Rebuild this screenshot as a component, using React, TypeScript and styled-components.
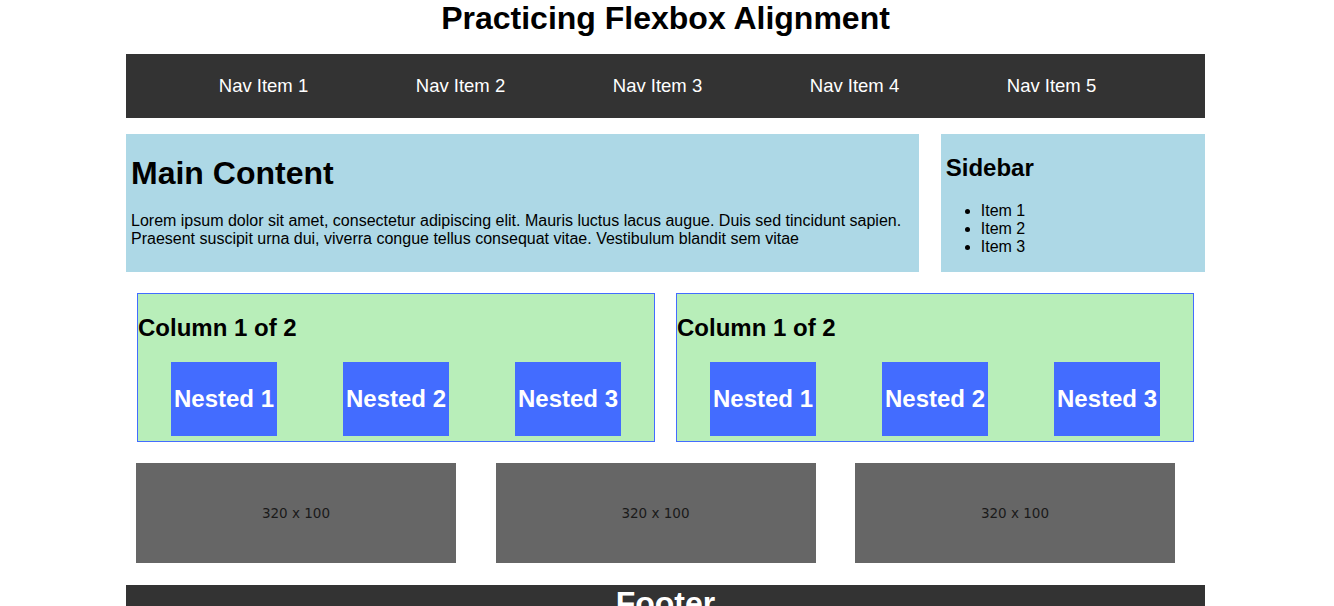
import React from 'react';
import styled, {createGlobalStyle} from 'styled-components';

const GlobalStyle = createGlobalStyle`
    body {
        margin: 0;
        padding-right: 3px;
        font-family: "Liberation Sans", Arial, sans-serif;
        color: #000;
        background: #fff;
    }
`;

const navItems = ['Nav Item 1', 'Nav Item 2', 'Nav Item 3', 'Nav Item 4', 'Nav Item 5'];
const sidebarItems = ['Item 1', 'Item 2', 'Item 3'];
const nested = ['Nested 1', 'Nested 2', 'Nested 3'];
const images = [1, 2, 3];

const App = () => (
    <>
        <GlobalStyle/>
        <PageTitle>{'Practicing Flexbox Alignment'}</PageTitle>
        <Container>
            <Nav>
                <NavList>
                    {navItems.map((item) => (
                        <NavItem key={item}>{item}</NavItem>
                    ))}
                </NavList>
            </Nav>
            <ContentRow>
                <Panel $grow={3}>
                    <MainTitle>{'Main Content'}</MainTitle>
                    <Text>
                        {'Lorem ipsum dolor sit amet, consectetur adipiscing elit. Mauris luctus lacus augue. Duis sed tincidunt sapien. Praesent suscipit urna dui, viverra congue tellus consequat vitae. Vestibulum blandit sem vitae'}
                    </Text>
                </Panel>
                <Panel $grow={1}>
                    <SidebarTitle>{'Sidebar'}</SidebarTitle>
                    <SidebarList>
                        {sidebarItems.map((item) => (
                            <li key={item}>{item}</li>
                        ))}
                    </SidebarList>
                </Panel>
            </ContentRow>
            <ColumnRow>
                {[0, 1].map((col) => (
                    <Column key={col}>
                        <ColumnTitle>{'Column 1 of 2'}</ColumnTitle>
                        <NestedRow>
                            {nested.map((label) => (
                                <NestedBox key={label}>
                                    <NestedLabel>{label}</NestedLabel>
                                </NestedBox>
                            ))}
                        </NestedRow>
                    </Column>
                ))}
            </ColumnRow>
            <ImageRow>
                {images.map((i) => (
                    <Placeholder key={i}>{'320 x 100'}</Placeholder>
                ))}
            </ImageRow>
            <Footer>
                <FooterTitle>{'Footer'}</FooterTitle>
            </Footer>
        </Container>
    </>
);

const PageTitle = styled.h1`
    margin: 0 0 17px;
    font-size: 32px;
    font-weight: 700;
    text-align: center;
`;

const Container = styled.div`
    width: 1079px;
    margin: 0 auto;
`;

const Nav = styled.nav`
    height: 64px;
    background: #333;
    display: flex;
    align-items: center;
`;

const NavList = styled.ul`
    display: flex;
    margin: 0;
    padding: 0 0 0 39px;
    list-style: none;
`;

const NavItem = styled.li`
    width: 197px;
    text-align: center;
    font-size: 18.5px;
    color: #fff;
`;

const ContentRow = styled.div`
    display: flex;
    gap: 22px;
    margin-top: 16px;
`;

// flex-basis 0 so the 3:1 split ignores the inner spacing
const Panel = styled.div<{$grow: number}>`
    flex: ${(p) => p.$grow} 1 0;
    background: #add8e6;
`;

const MainTitle = styled.h1`
    margin: 21px 5px 20px;
    font-size: 32px;
`;

const Text = styled.p`
    margin: 0 5px;
    font-size: 16px;
`;

const SidebarTitle = styled.h2`
    margin: 20px 5px;
    font-size: 24px;
`;

const SidebarList = styled.ul`
    margin: 0 5px 16px;
    padding-left: 35px;
    font-size: 16px;
`;

const ColumnRow = styled.div`
    display: flex;
    gap: 21px;
    margin-top: 21px;
    padding: 0 11px;
`;

const Column = styled.div`
    flex: 1;
    background: #b8eeb9;
    border: 1px solid #436cff;
    padding-bottom: 5px;
`;

const ColumnTitle = styled.h2`
    margin: 20px 0;
    font-size: 24px;
`;

const NestedRow = styled.div`
    display: flex;
    justify-content: space-around;
`;

const NestedBox = styled.div`
    background: #436cff;
    padding: 3px;
`;

const NestedLabel = styled.h2`
    margin: 20px 0;
    font-size: 24px;
    color: #fff;
`;

const ImageRow = styled.div`
    display: flex;
    gap: 39.5px;
    margin-top: 21px;
    padding-left: 10px;
`;

const Placeholder = styled.div`
    width: 320px;
    height: 100px;
    background: #666;
    display: flex;
    align-items: center;
    justify-content: center;
    font-family: "DejaVu Sans", Verdana, sans-serif;
    font-size: 13.5px;
    color: #1a1a1a;
`;

const Footer = styled.footer`
    margin-top: 22px;
    background: #333;
    text-align: center;
`;

const FooterTitle = styled.h1`
    margin: 0;
    padding: 0 0 8px;
    font-size: 32px;
    color: #fff;
`;

export default App;
